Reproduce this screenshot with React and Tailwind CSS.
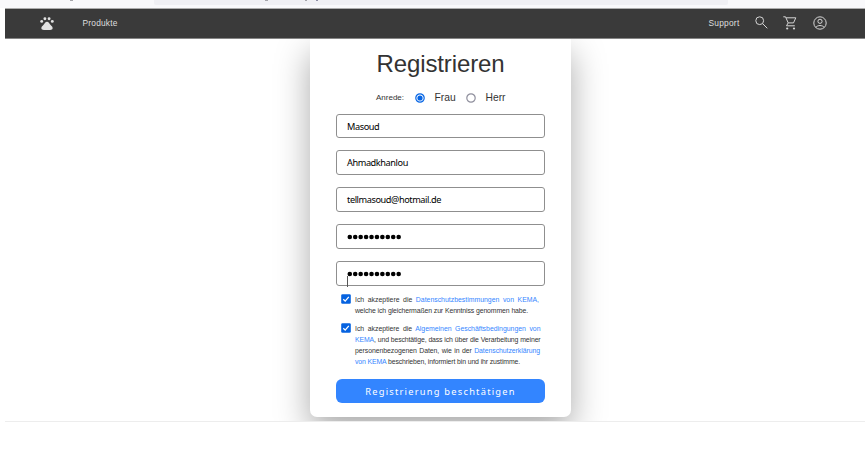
import React from "react";

function BrowserEdge() {
  return (
    <div className="h-2 overflow-hidden bg-[#f9f9fb] pl-[154px]">
      <div className="relative h-[5px] w-[574px] rounded-b-[2px] bg-[#f0f0f4]">
        <span className="absolute left-[-84px] top-0 h-px w-[3px] bg-[#a5a5aa]" />
        <span className="absolute left-[111px] top-0 h-px w-[3px] bg-[#a5a5aa]" />
        <span className="absolute left-[151px] top-0 h-px w-[2px] bg-[#a5a5aa]" />
        <span className="absolute left-[162px] top-0 h-px w-[2px] bg-[#8f8fa5]" />
      </div>
    </div>
  );
}

function Paw() {
  return (
    <svg className="h-[14px] w-[14px]" viewBox="0 0 14 14" fill="#e2e2e2">
      <circle cx="1.7" cy="4.4" r="1.45" />
      <circle cx="4.9" cy="1.7" r="1.45" />
      <circle cx="9.1" cy="1.7" r="1.45" />
      <circle cx="12.3" cy="4.4" r="1.45" />
      <path d="M7 4.7C8.6 4.7 9.3 6.4 10.4 7.7C11.6 9 13 10 12.6 11.6C12.2 13.3 11 12.9 7 12.9S1.8 13.3 1.4 11.6C1 10 2.4 9 3.6 7.7C4.7 6.4 5.4 4.7 7 4.7Z" />
    </svg>
  );
}

function SearchIcon() {
  return (
    <svg className="h-[13px] w-[13px]" viewBox="0 0 13 13" fill="none" stroke="#d6d6d6" strokeWidth="1">
      <circle cx="4.7" cy="4.7" r="3.9" />
      <path d="M7.6 7.6L12.3 12.3" />
    </svg>
  );
}

function CartIcon() {
  return (
    <svg className="h-[14px] w-[14px]" viewBox="0 0 14 14" fill="none" stroke="#d6d6d6" strokeWidth="1">
      <path d="M0.3 0.8H2.5L5.2 6.9H10.5L12.8 1.8H3.1M5.2 6.9L3.5 9.8H11.8" />
      <circle cx="4.2" cy="12.5" r="1.1" fill="#d6d6d6" stroke="none" />
      <circle cx="11" cy="12.5" r="1.1" fill="#d6d6d6" stroke="none" />
    </svg>
  );
}

function AccountIcon() {
  return (
    <svg className="h-[14px] w-[14px]" viewBox="0 0 14 14" fill="none" stroke="#d6d6d6" strokeWidth="1">
      <circle cx="7" cy="7" r="6.2" />
      <circle cx="7" cy="5.3" r="2.1" />
      <path d="M2.7 11.4C4.8 8.9 9.2 8.9 11.3 11.4" />
    </svg>
  );
}

function Navbar() {
  return (
    <nav className="relative z-10 ml-[5px] flex h-[31px] items-center border-t border-b border-t-[#adadad] border-b-[#858585] bg-[#3a3a3a] pl-[35px] pr-[38px] text-[8.4px] text-[#dedede]">
      <Paw />
      <span className="ml-[28.5px] tracking-[0.2px]">Produkte</span>
      <span className="ml-auto tracking-[0.25px]">Support</span>
      <span className="-mt-[2px] ml-[15.5px]"><SearchIcon /></span>
      <span className="-mt-[2px] ml-[15px]"><CartIcon /></span>
      <span className="-mt-[2px] ml-[16px]"><AccountIcon /></span>
    </nav>
  );
}

function Radio({ checked }) {
  return (
    <svg className="h-[10px] w-[10px]" viewBox="0 0 10 10" fill="none">
      <circle cx="5" cy="5" r="4.2" stroke={checked ? "#0564e4" : "#8f8f9d"} strokeWidth="1.2" />
      {checked && <circle cx="5" cy="5" r="2.6" fill="#0564e4" />}
    </svg>
  );
}

function Field({ children, caret }) {
  return (
    <div className="relative flex h-[24.8px] w-[209px] items-center rounded-[3px] border border-[#8f8f8f] bg-white pl-[10px] pt-px font-['Noto_Sans',sans-serif] text-[9.2px] tracking-[-0.42px] text-black">
      {children}
      {caret && <span className="absolute left-[10px] top-[14px] h-[11px] w-px bg-[#555]" />}
    </div>
  );
}

function Dots() {
  return (
    <svg className="h-[6px] w-[56px]" viewBox="0 0 56 6" fill="black">
      {Array.from({ length: 10 }, (_, i) => (
        <circle key={i} cx={2.8 + i * 5.43} cy="3" r="2.3" />
      ))}
    </svg>
  );
}

function Checkbox() {
  return (
    <svg className="h-[10px] w-[10px] shrink-0" viewBox="0 0 10 10" fill="none">
      <rect x="0.2" y="0.2" width="9.6" height="9.6" rx="1.3" fill="#0562e0" />
      <path d="M2.3 5.2L4.2 7.1L7.8 2.9" stroke="white" strokeWidth="1.3" />
    </svg>
  );
}

function Blue({ children }) {
  return <span className="text-[#3486ff]">{children}</span>;
}

export default function App() {
  return (
    <div className="h-[456px] w-[865px] overflow-hidden bg-white font-['Liberation_Sans',Arial,sans-serif]">
      <BrowserEdge />
      <Navbar />
      <main className="ml-[5px] flex h-[383px] overflow-hidden border-b border-[#ededed] pl-[305px]">
        <form className="flex h-[378px] w-[261px] flex-col items-center rounded-b-[7px] bg-white shadow-[0_14px_34px_rgba(0,0,0,0.34)]">
          <h1 className="mt-[9px] h-[32px] text-[24px] leading-[32px] tracking-[-0.12px] text-[#333]">Registrieren</h1>
          <div className="mt-[11.6px] flex h-[12px] w-[209px] items-center pl-[40px] text-[#333]">
            <span className="w-[38.5px] text-[8px]">Anrede:</span>
            <Radio checked />
            <span className="ml-[10px] w-[31px] text-[10.3px]">Frau</span>
            <Radio />
            <span className="ml-[10px] text-[10.3px]">Herr</span>
          </div>
          <div className="mt-[10px] flex flex-col gap-[12px]">
            <Field>Masoud</Field>
            <Field>Ahmadkhanlou</Field>
            <Field>tellmasoud@hotmail.de</Field>
            <Field><Dots /></Field>
            <Field caret><Dots /></Field>
          </div>
          <div className="mt-[8.4px] flex w-[209px] gap-[4px] pl-[5px] text-[6.9px] leading-[11px] text-[#333]">
            <Checkbox />
            <div className="whitespace-nowrap">
              <p className="w-[184px] [text-align-last:justify]">Ich akzeptiere die <Blue>Datenschutzbestimmungen von KEMA,</Blue></p>
              <p className="w-[173px] tracking-[-0.13px] [text-align-last:justify]">welche ich gleichermaßen zur Kenntniss genommen habe.</p>
            </div>
          </div>
          <div className="mt-[7px] flex w-[209px] gap-[4px] pl-[5px] text-[6.9px] leading-[11px] text-[#333]">
            <Checkbox />
            <div className="whitespace-nowrap">
              <p className="w-[185.5px] [text-align-last:justify]">Ich akzeptiere die <Blue>Algemeinen Geschäftsbedingungen von</Blue></p>
              <p className="w-[185.5px] tracking-[-0.13px] [text-align-last:justify]"><Blue>KEMA</Blue>, und beschtätige, dass ich über die Verarbeitung meiner</p>
              <p className="w-[185px] tracking-[-0.06px] [text-align-last:justify]">personenbezogenen Daten, wie in der <Blue>Datenschutzerklärung</Blue></p>
              <p className="w-[165px] tracking-[-0.13px] [text-align-last:justify]"><Blue>von KEMA</Blue> beschrieben, informiert bin und ihr zustimme.</p>
            </div>
          </div>
          <button type="button" className="mt-[12.4px] h-[24px] w-[209px] rounded-[6px] bg-[#3385ff] pt-px font-['Noto_Sans',sans-serif] text-[9.3px] leading-[23px] tracking-[1.23px] text-white">
            Registrierung beschtätigen
          </button>
        </form>
      </main>
    </div>
  );
}
